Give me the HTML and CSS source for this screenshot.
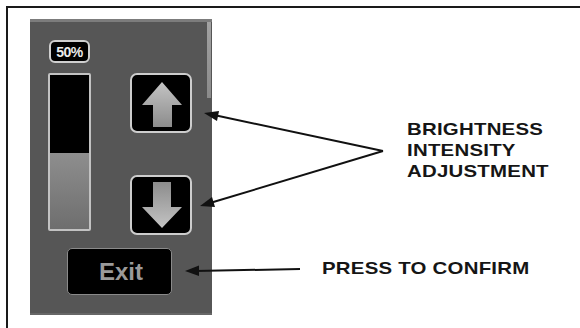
FILE: index.html
```html
<!DOCTYPE html>
<html lang="en">
<head>
    <meta charset="UTF-8">
    <meta name="viewport" content="width=device-width, initial-scale=1.0">
    <title>Brightness control</title>
    <link rel="stylesheet" href="styles.css">
</head>
<body>
    <div class="figure">
        <div class="panel">
            <div class="controls">
                <div class="level">
                    <span class="badge">50%</span>
                    <div class="bar">
                        <div class="bar-empty"></div>
                        <div class="bar-fill"></div>
                    </div>
                </div>
                <div class="buttons">
                    <div class="btn">
                        <svg viewBox="0 0 58 56" width="58" height="56">
                            <defs>
                                <linearGradient id="upGrad" x1="0" y1="0" x2="0" y2="1">
                                    <stop offset="0" stop-color="#c4c4c4"/>
                                    <stop offset="1" stop-color="#8c8c8c"/>
                                </linearGradient>
                            </defs>
                            <path d="M30 7 L50 30 L40 30 L40 52 L21 52 L21 30 L10 30 Z" fill="url(#upGrad)"/>
                        </svg>
                    </div>
                    <div class="btn">
                        <svg viewBox="0 0 58 56" width="58" height="56">
                            <defs>
                                <linearGradient id="downGrad" x1="0" y1="0" x2="0" y2="1">
                                    <stop offset="0" stop-color="#8c8c8c"/>
                                    <stop offset="1" stop-color="#c4c4c4"/>
                                </linearGradient>
                            </defs>
                            <path d="M21 5 L39 5 L39 30 L50 30 L30 51 L10 30 L21 30 Z" fill="url(#downGrad)"/>
                        </svg>
                    </div>
                </div>
            </div>
            <div class="exit">Exit</div>
        </div>
        <div class="labels">
            <p class="adjust">BRIGHTNESS<br>INTENSITY<br>ADJUSTMENT</p>
            <p class="confirm">PRESS TO CONFIRM</p>
        </div>
    </div>

    <!-- pointer arrows drawn over the figure -->
    <svg class="pointers" viewBox="0 0 580 328" width="580" height="328">
        <g stroke="#111" stroke-width="2" fill="none">
            <line x1="383" y1="151" x2="214" y2="115"/>
            <line x1="383" y1="151" x2="210" y2="203"/>
            <line x1="300" y1="269" x2="195" y2="271"/>
        </g>
        <g fill="#111">
            <polygon points="204,113 219,111 217,121"/>
            <polygon points="200,206 212,197 215,207"/>
            <polygon points="185,271 199,265.5 199,276"/>
        </g>
    </svg>
</body>
</html>
```

FILE: styles.css
```css
*{
    margin: 0;
    padding: 0;
    box-sizing: border-box;
}
body{
    width: 580px;
    height: 328px;
    overflow: hidden;
    background: #fff;
    font-family: "Liberation Sans", Arial, sans-serif;
    position: relative;
}
.figure{
    margin: 6px 0 0 6px;
    height: 322px;
    border-top: 2px solid #1a1a1a;
    border-left: 2px solid #1a1a1a;
    padding: 11px 0 0 22px;
    display: flex;
    align-items: flex-start;
}
.panel{
    width: 182px;
    height: 296px;
    background: linear-gradient(#a2a2a2, #8a8a8a) no-repeat right 1px top / 4px 76px, #565656;
    border-top: 3px solid #7c7c7c;
    border-bottom: 2px solid #666;
    padding: 18px 0 0 18px;
    display: flex;
    flex-direction: column;
}
.controls{
    display: flex;
    gap: 39px;
}
.level{
    width: 43px;
    display: flex;
    flex-direction: column;
    gap: 10px;
}
.badge{
    margin-left: 1px;
    width: 41px;
    height: 23px;
    background: #000;
    border: 2px solid #cfcfcf;
    border-radius: 6px;
    color: #ececec;
    font-size: 14px;
    font-weight: bold;
    letter-spacing: -0.5px;
    display: flex;
    justify-content: center;
    align-items: center;
}
.bar{
    height: 158px;
    border: 2px solid #c2c2c2;
    border-radius: 2px;
    display: flex;
    flex-direction: column;
}
.bar-empty{
    height: 78px;
    background: #000;
}
.bar-fill{
    flex: 1;
    background: linear-gradient(#8e8e8e, #6e6e6e);
}
.buttons{
    margin-top: 33px;
    display: flex;
    flex-direction: column;
    gap: 42px;
}
.btn{
    width: 62px;
    height: 60px;
    background: #000;
    border: 2px solid #cdcdcd;
    border-radius: 7px;
}
.btn svg{
    display: block;
}
.exit{
    margin: 13px 0 0 19px;
    width: 105px;
    height: 47px;
    background: #000;
    border: 1.5px solid #8a8a8a;
    border-radius: 5px;
    color: #9a9a9a;
    font-size: 24px;
    font-weight: bold;
    display: flex;
    justify-content: center;
    align-items: center;
    padding-left: 3px;
}
.labels{
    display: flex;
    flex-direction: column;
    color: #151515;
    font-size: 17px;
    font-weight: bold;
    letter-spacing: 0.2px;
    line-height: 21px;
}
.labels p{
    transform: scaleX(1.2);
    transform-origin: left top;
    white-space: nowrap;
}
.adjust{
    margin: 100px 0 0 195px;
}
.confirm{
    margin: 76px 0 0 110px;
}
.pointers{
    position: absolute;
    top: 0;
    left: 0;
    pointer-events: none;
}
```
